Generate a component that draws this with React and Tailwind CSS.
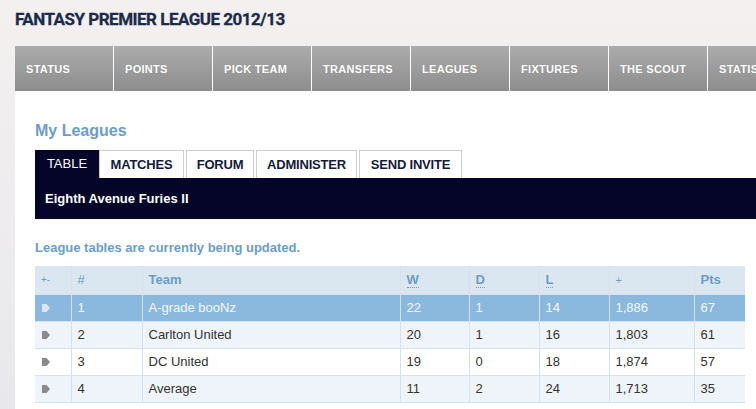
import React from "react";

const navItems = ["STATUS", "POINTS", "PICK TEAM", "TRANSFERS", "LEAGUES", "FIXTURES", "THE SCOUT", "STATISTICS"];
const tabs = [
  { t: "MATCHES", w: "w-[85px]" },
  { t: "FORUM", w: "w-[68px]" },
  { t: "ADMINISTER", w: "w-[101px]" },
  { t: "SEND INVITE", w: "w-[103px]" },
];
const rows = [
  { n: 1, team: "A-grade booNz", w: 22, d: 1, l: 14, p: "1,886", pts: 67 },
  { n: 2, team: "Carlton United", w: 20, d: 1, l: 16, p: "1,803", pts: 61 },
  { n: 3, team: "DC United", w: 19, d: 0, l: 18, p: "1,874", pts: 57 },
  { n: 4, team: "Average", w: 11, d: 2, l: 24, p: "1,713", pts: 35 },
];

function Arrow({ light }) {
  return (
    <svg width="8" height="8" viewBox="0 0 8 8" className="block ml-[1px]">
      <path d="M0 0 H4.5 L8 4 L4.5 8 H0 Z" fill={light ? "#dfe6ee" : "#8a8a8a"} />
    </svg>
  );
}

export default function App() {
  const cell = "border-r border-[#d3e2ee] px-[6px] h-[27px] align-middle";
  return (
    <div
      className="w-[756px] h-[409px] overflow-hidden bg-gradient-to-b from-[#f4f0f0] to-[#e8e8ec]"
      style={{ fontFamily: "'Liberation Sans', Arial, sans-serif" }}
    >
      <div className="h-[46px] pl-[15px] pt-[8px]">
        <h1
          className="text-[17px] leading-[22px] font-bold text-[#1b2b4b] tracking-[-0.5px]"
          style={{ fontFamily: "Roboto, sans-serif", WebkitTextStroke: "0.3px #1b2b4b" }}
        >
          FANTASY PREMIER LEAGUE 2012/13
        </h1>
      </div>
      <div className="ml-[15px] bg-white h-[363px]">
        <div className="flex h-[45px] overflow-hidden">
          {navItems.map((n) => (
            <div
              key={n}
              className="w-[99px] shrink-0 border-r border-white bg-gradient-to-b from-[#acacac] to-[#8d8d8d] flex items-center pl-[11px] pt-[1px] text-[11px] font-bold text-white tracking-[0.3px] whitespace-nowrap"
              style={{ textShadow: "0 0 1px rgba(0,0,0,0.15)" }}
            >
              {n}
            </div>
          ))}
        </div>
        <div className="px-[20px]">
          <h2 className="mt-[31px] text-[16px] leading-[18px] font-bold text-[#6c9dc8]">My Leagues</h2>
          <div className="mt-[10px] flex h-[28px]">
            <div className="h-[28px] w-[64px] bg-[#05052a] text-white text-[13px] flex items-center justify-center">
              TABLE
            </div>
            {tabs.map((t, i) => (
              <div
                key={t.t}
                className={`${t.w} h-[28px] border border-b-0 border-[#cfcfcf] flex items-center justify-center text-[13px] font-bold text-[#141a3a] tracking-[-0.2px] whitespace-nowrap ${i === 0 ? "ml-0" : "ml-[2px]"}`}
              >
                {t.t}
              </div>
            ))}
          </div>
          <div className="h-[41px] bg-[#05052a] -mr-[20px] flex items-center pl-[10px] text-[13px] font-bold text-white">
            Eighth Avenue Furies II
          </div>
          <p className="mt-[21px] text-[13px] leading-[16px] font-bold text-[#6c9dc8]">
            League tables are currently being updated.
          </p>
          <table className="mt-[10px] w-[710px] border-collapse text-[13px] border-b border-[#d3e2ee]">
            <thead>
              <tr className="bg-[#dae7f1] text-[#6c9dc8] text-left h-[28px]">
                <th className={`${cell} w-[36px] font-normal text-[10px]`}>+-</th>
                <th className={`${cell} w-[71px] font-normal`}>#</th>
                <th className={`${cell} w-[258px] font-bold`}>Team</th>
                <th className={`${cell} w-[69px] font-bold`}>
                  <span className="border-b border-dotted border-[#6c9dc8]">W</span>
                </th>
                <th className={`${cell} w-[70px] font-bold`}>
                  <span className="border-b border-dotted border-[#6c9dc8]">D</span>
                </th>
                <th className={`${cell} w-[70px] font-bold`}>
                  <span className="border-b border-dotted border-[#6c9dc8]">L</span>
                </th>
                <th className={`${cell} w-[85px] font-normal text-[11px]`}>+</th>
                <th className="px-[6px] font-bold">Pts</th>
              </tr>
            </thead>
            <tbody>
              {rows.map((r, i) => {
                const hl = i === 0;
                const bg = hl ? "bg-[#8bb9de] text-[#f4f8fc]" : i % 2 === 1 ? "bg-[#eef4f9] text-[#333]" : "bg-white text-[#333]";
                return (
                  <tr key={r.n} className={`${bg} border-t border-[#d3e2ee]`}>
                    <td className={cell}>
                      <Arrow light={hl} />
                    </td>
                    <td className={cell}>{r.n}</td>
                    <td className={cell}>{r.team}</td>
                    <td className={cell}>{r.w}</td>
                    <td className={cell}>{r.d}</td>
                    <td className={cell}>{r.l}</td>
                    <td className={cell}>{r.p}</td>
                    <td className="px-[6px] h-[27px]">{r.pts}</td>
                  </tr>
                );
              })}
            </tbody>
          </table>
        </div>
      </div>
    </div>
  );
}
